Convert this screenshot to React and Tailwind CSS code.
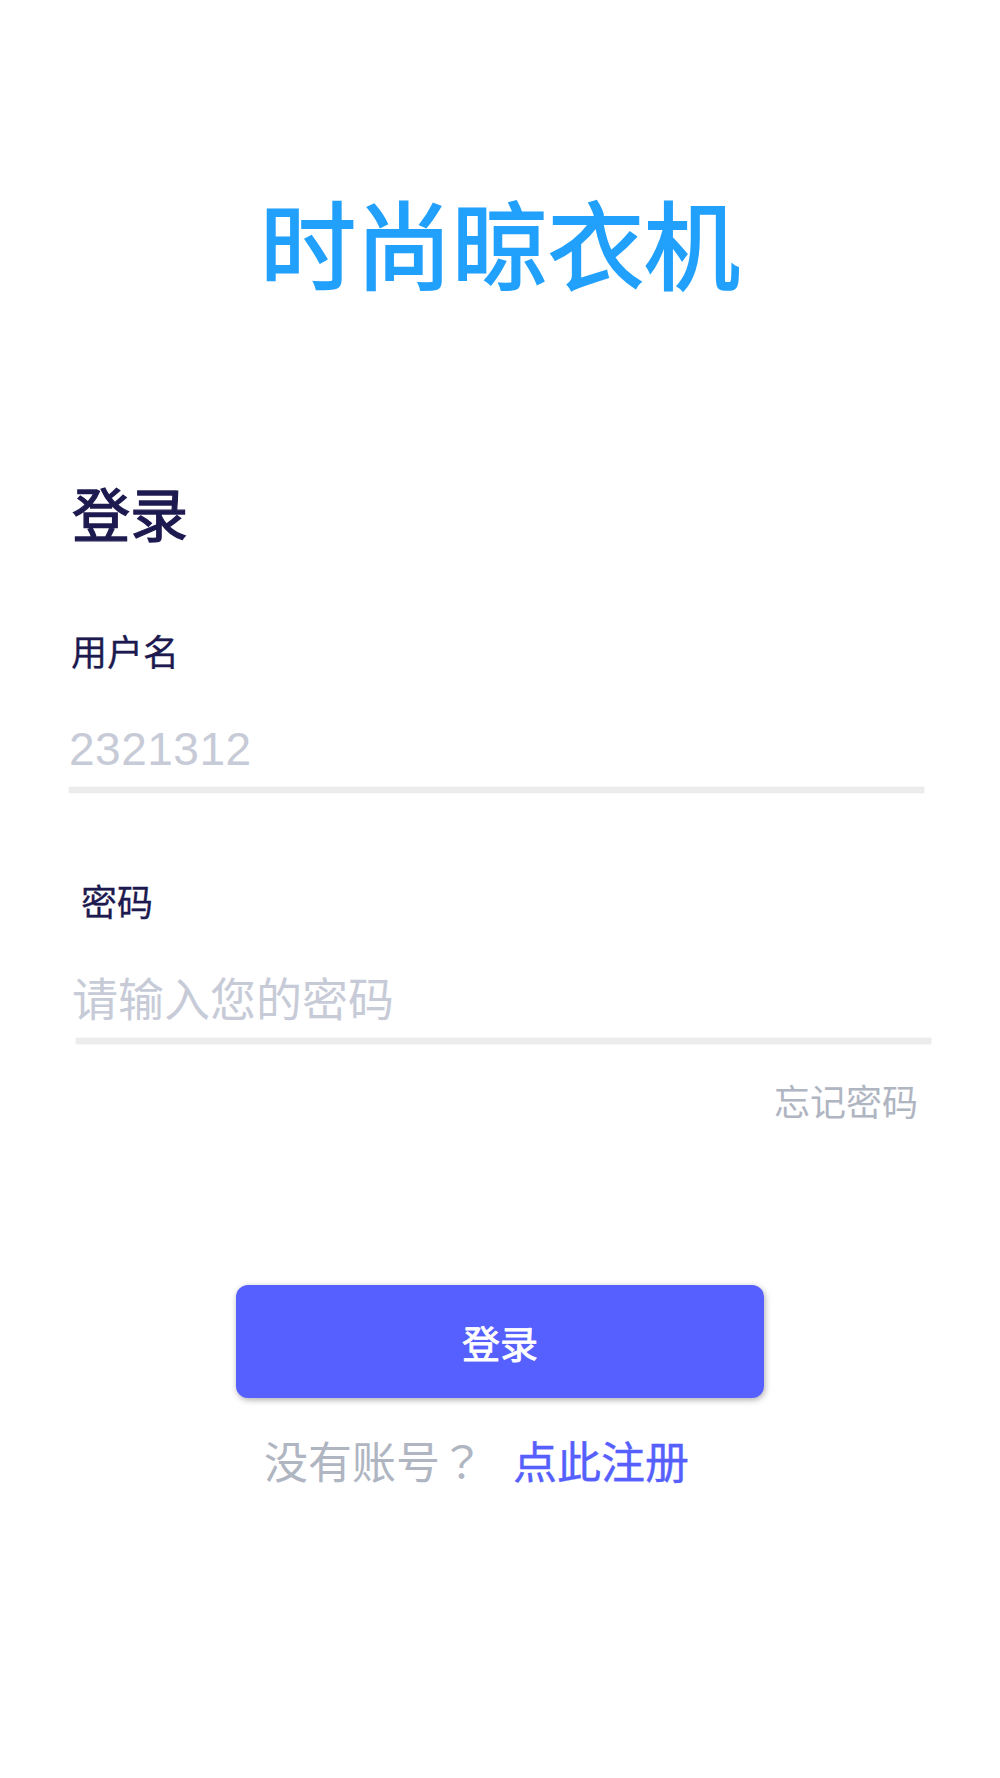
import React from "react";

const FONT = {
  fontFamily:
    '"Liberation Sans", "Noto Sans CJK SC", "Noto Sans", sans-serif',
};

export default function App() {
  return (
    <div
      className="w-[1000px] h-[1778px] bg-white flex flex-col"
      style={FONT}
    >
      <h1 className="mt-[193px] text-center text-[96px] leading-none font-normal text-[#21a0fc] [-webkit-text-stroke:2px_#21a0fc] [font-family:'Noto_Sans_CJK_SC',sans-serif]">
        时尚晾衣机
      </h1>

      <div className="flex flex-col pl-[69px] mt-[194px]">
        <h2 className="ml-[3px] text-[58px] leading-none font-normal text-[#1d1a50] [-webkit-text-stroke:1.3px_#1d1a50] [font-family:'Noto_Sans_CJK_SC',sans-serif]">
          登录
        </h2>

        <label className="ml-[2px] mt-[95px] text-[36px] leading-none text-[#1d1a50] [-webkit-text-stroke:0.3px_#1d1a50]">
          用户名
        </label>
        <input
          readOnly
          value="2321312"
          className="mt-[39px] w-[855px] h-[76px] p-0 text-[46px] tracking-[0.5px] text-[#c7cbd7] bg-transparent outline-none border-0"
        />
        <div className="w-[855px] h-[6px] bg-[#ececec] shadow-[0_0_1px_rgba(0,0,0,0.18)]" />

        <label className="ml-[12px] mt-[93px] text-[36px] leading-none text-[#1d1a50] [-webkit-text-stroke:0.3px_#1d1a50]">
          密码
        </label>
        <input
          type="password"
          placeholder="请输入您的密码"
          className="ml-[3px] mt-[40px] w-[855px] h-[76px] p-0 text-[46px] text-[#1d1a50] placeholder:text-[#c7cbd7] bg-transparent outline-none border-0"
        />
        <div className="ml-[7px] w-[855px] h-[6px] bg-[#ececec] shadow-[0_0_1px_rgba(0,0,0,0.18)]" />

        <div className="w-[849px] mt-[42px] flex justify-end">
          <span className="text-[36px] leading-none text-[#b0b5c2]">
            忘记密码
          </span>
        </div>
      </div>

      <button className="mt-[163px] mx-auto w-[528px] h-[113px] rounded-[12px] bg-[#5560fe] text-white text-[38px] leading-none font-normal [-webkit-text-stroke:0.8px_#ffffff] shadow-[1px_2px_6px_rgba(0,0,0,0.32)] flex items-center justify-center [font-family:'Noto_Sans_CJK_SC',sans-serif]">
        登录
      </button>

      <div className="mt-[40px] ml-[264px] flex items-center text-[44px] leading-none [font-family:'Noto_Sans_CJK_SC',sans-serif]">
        <span className="text-[#b0b5c2]">
          没有账号<span className="[font-family:'Noto_Sans_CJK_TC',sans-serif]">？</span>
        </span>
        <span className="ml-[29px] text-[#5560fe] [-webkit-text-stroke:0.4px_#5560fe]">点此注册</span>
      </div>
    </div>
  );
}
